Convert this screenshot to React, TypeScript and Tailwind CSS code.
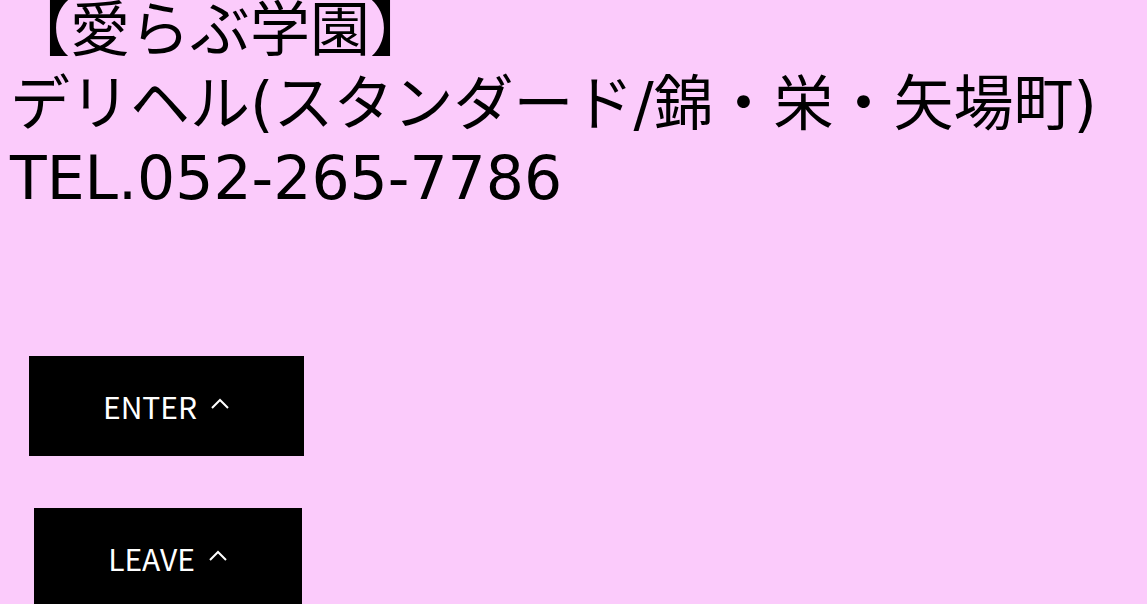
import React from 'react';

const Chevron: React.FC = () => (
  <svg width="20" height="12" viewBox="0 0 20 12" className="ml-[13px] mb-[5px]" fill="none">
    <path d="M2 10 L10 2 L18 10" stroke="white" strokeWidth="2" />
  </svg>
);

const App: React.FC = () => {
  return (
    <div className="min-h-screen w-full bg-[#fbcbfb] text-black">
      <h1
        className="-mt-[7px] pl-[10px] text-[60px] leading-[74px] font-normal"
        style={{ fontFamily: '"DejaVu Sans", "Noto Sans CJK JP", sans-serif' }}
      >
        【愛らぶ学園】<br />
        デリヘル(スタンダード/錦・栄・矢場町)<br />
        TEL.052-265-7786
      </h1>
      <div
        className="flex flex-col items-start pt-[141px]"
        style={{ fontFamily: '"Noto Sans CJK JP", sans-serif' }}
      >
        <button
          type="button"
          className="ml-[29px] flex h-[100px] w-[275px] items-center justify-center bg-black text-[30px] text-white"
        >
          ENTER
          <Chevron />
        </button>
        <button
          type="button"
          className="ml-[34px] mt-[52px] flex h-[100px] w-[268px] items-center justify-center bg-black text-[30px] text-white"
        >
          LEAVE
          <Chevron />
        </button>
      </div>
    </div>
  );
};

export default App;
